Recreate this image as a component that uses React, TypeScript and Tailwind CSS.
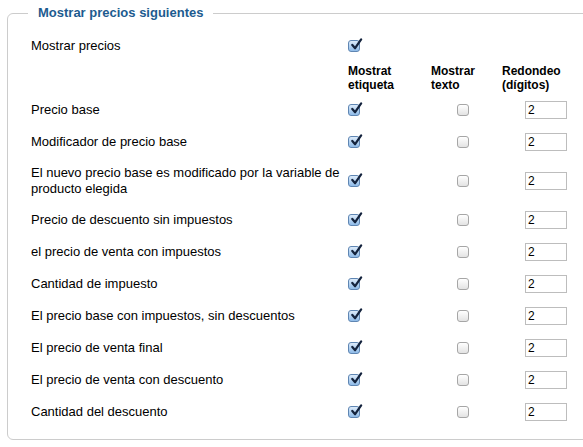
const rows: { label: string; tall?: boolean }[] = [
  { label: 'Precio base' },
  { label: 'Modificador de precio base' },
  { label: 'El nuevo precio base es modificado por la variable de producto elegida', tall: true },
  { label: 'Precio de descuento sin impuestos' },
  { label: 'el precio de venta con impuestos' },
  { label: 'Cantidad de impuesto' },
  { label: 'El precio base con impuestos, sin descuentos' },
  { label: 'El precio de venta final' },
  { label: 'El precio de venta con descuento' },
  { label: 'Cantidad del descuento' },
];

function Checked() {
  return (
    <span className="relative inline-block w-[12px] h-[12px] rounded-[3px] border border-[#5f86b3] bg-gradient-to-b from-[#dcebfa] to-[#8fbbe8]">
      <svg viewBox="0 0 14 14" className="absolute left-[1px] -top-[3px] w-[13px] h-[13px]">
        <path d="M2.5 7.5 L5.5 11 L12 1.5" fill="none" stroke="#14233d" strokeWidth="2.4" strokeLinecap="round" strokeLinejoin="round" />
      </svg>
    </span>
  );
}

function Unchecked() {
  return (
    <span className="inline-block w-[12px] h-[12px] rounded-[3px] border border-[#a6a6a6] bg-gradient-to-b from-white to-[#e3e3e3]" />
  );
}

function Digits() {
  return (
    <div className="w-[42px] h-[18px] border border-[#bdbdbd] bg-white pl-[2px] text-[12px] leading-[16px] text-black">
      2
    </div>
  );
}

export default function App() {
  return (
    <div
      className="w-[583px] h-[447px] overflow-hidden bg-white text-black"
      style={{ fontFamily: '"Liberation Sans", Arial, sans-serif' }}
    >
      <fieldset className="ml-[7px] mt-[4px] w-[620px] border border-[#cccccc] rounded-[6px] pl-[23px] pb-[11px] pt-[12px]">
        <legend className="-ml-[3px] px-[10px] text-[13px] leading-[18px] font-bold text-[#1d5b8f]">
          Mostrar precios siguientes
        </legend>

        {/* Mostrar precios */}
        <div className="flex items-center h-[24px] text-[13px]">
          <div className="w-[317px]">Mostrar precios</div>
          <Checked />
        </div>

        {/* column headers */}
        <div className="flex h-[36px] pt-[6px] text-[12px] leading-[14px] font-bold">
          <div className="w-[317px]" />
          <div className="w-[83px]">Mostrat<br />etiqueta</div>
          <div className="w-[71px]">Mostrar<br />texto</div>
          <div>Redondeo<br />(dígitos)</div>
        </div>

        {rows.map((r) => (
          <div
            key={r.label}
            className={r.tall
              ? 'flex items-center py-[7px] min-h-[32px] text-[13px] leading-[16px]'
              : 'flex items-center py-[6px] min-h-[32px] text-[13px] leading-[16px]'}
          >
            <div className="w-[317px] pr-[4px]">{r.label}</div>
            <div className="w-[83px] flex">
              <Checked />
            </div>
            <div className="w-[71px] flex pl-[26px]">
              <Unchecked />
            </div>
            <div className="pl-[23px]">
              <Digits />
            </div>
          </div>
        ))}
      </fieldset>
    </div>
  );
}
